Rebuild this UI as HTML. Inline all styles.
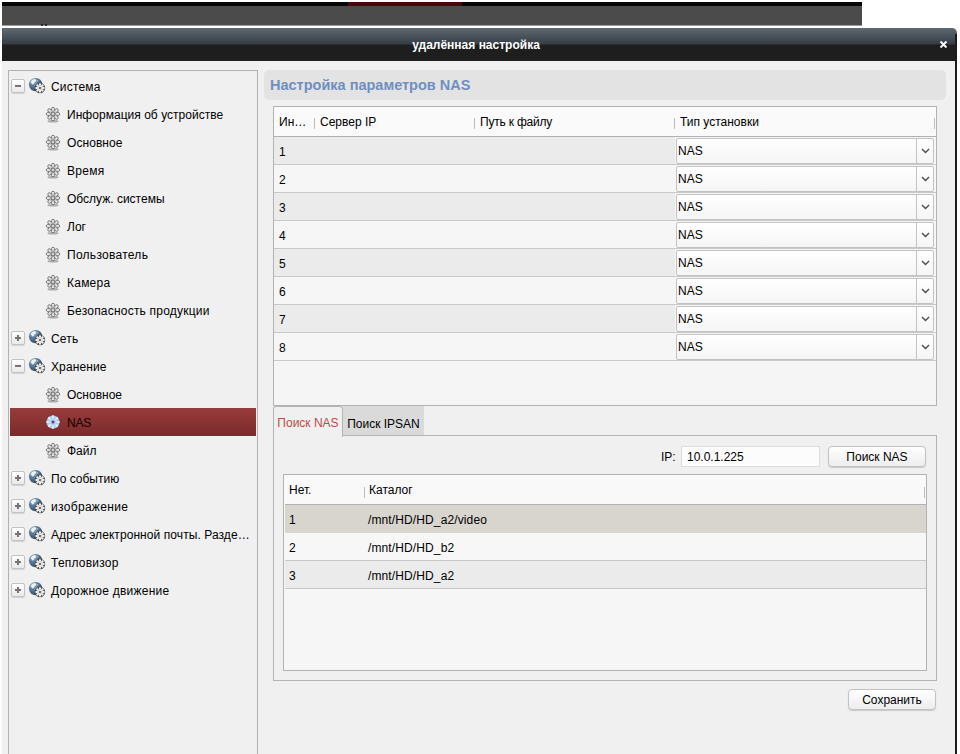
<!DOCTYPE html>
<html lang="ru">
<head>
<meta charset="utf-8">
<title>удалённая настройка</title>
<style>
html,body{margin:0;padding:0;background:#fff;}
body{width:960px;height:754px;position:relative;overflow:hidden;font-family:"Liberation Sans",Arial,sans-serif;font-size:12px;color:#000;}
.abs{position:absolute;}
#topstrip{left:2px;top:2px;width:860px;height:24px;background:linear-gradient(#4b4b4b 0,#4b4b4b 23px,#9a9a9a 23px);}
#topstrip .blk{left:0;top:0;width:860px;height:4px;background:#060606;}
#topstrip .red{left:346px;top:0;width:114px;height:4px;background:#4a0709;}
#win{left:2px;top:28px;width:953px;height:726px;background:#f0f0f0;}
#rb{left:953px;top:6px;width:2px;height:720px;background:#1c1c1c;}
#title{left:0;top:0;width:955px;height:33px;border-top-right-radius:5px;background:linear-gradient(to bottom,#606870 0px,#4a525b 8px,#363d45 16px,#1e1e1e 17px,#1e1e1e 33px);color:#fff;font-weight:bold;text-align:center;line-height:34px;font-size:12px;box-sizing:border-box;padding-right:7px;}
#close{left:937px;top:12px;width:9px;height:9px;}
#left{left:6px;top:42px;width:248px;height:700px;border:1px solid #b2b2b2;background:#f0f0f0;}
.row{position:absolute;left:1px;width:246px;height:28px;line-height:28px;white-space:nowrap;}
.row span{position:absolute;top:1px;}
.sel{background:linear-gradient(to bottom,#983b3b,#7c2a2a);color:#0a0000;}
.exp{position:absolute;left:1px;top:7px;width:12px;height:12px;border:1px solid #c2c2c2;border-radius:2px;background:linear-gradient(#fff,#e9e9e9);box-shadow:0 1px 1px rgba(0,0,0,.13);}
.exp i{position:absolute;left:3px;top:5px;width:6px;height:2px;background:#747474;}
.exp b{position:absolute;left:5px;top:3px;width:2px;height:6px;background:#747474;}
svg.ico{position:absolute;}
#hdr{left:262px;top:42px;width:682px;height:30px;background:#e3e3e3;border-radius:5px;color:#6f8fc0;font-weight:bold;font-size:14.5px;line-height:29px;}
#hdr span{position:absolute;left:6px;top:1px;}
#tbl{left:271px;top:78px;width:662px;height:298px;border:1px solid #b2b2b2;background:#f5f5f5;}
.th{position:absolute;top:1px;height:29px;line-height:29px;white-space:nowrap;}
.sep{position:absolute;width:1px;height:11px;background:#bdbdbd;}
.tr{position:absolute;left:0;height:27px;line-height:27px;border-top:1px solid #c9c9c9;}
.tr.o{background:#ebebeb;}
.tr.e{background:#f6f6f6;}
.tr span{position:absolute;top:2px;}
.selbox{position:absolute;left:402px;top:1px;width:256px;height:24px;border:1px solid #c3c3c3;border-radius:2px;background:linear-gradient(#ffffff,#f5f5f5);line-height:24px;}
.selbox u{position:absolute;left:239px;top:0;width:1px;height:24px;background:#c3c3c3;}
.selbox svg{position:absolute;left:244px;top:9px;}
.selbox em{position:absolute;left:1px;top:0;font-style:normal;}
.tab{position:absolute;top:378px;height:29px;line-height:31px;text-align:center;white-space:nowrap;}
#tabpanel{left:271px;top:407px;width:662px;height:244px;border:1px solid #b4b4b4;background:#f0f0f0;}
.btn{position:absolute;border:1px solid #c2c2c2;border-radius:4px;background:linear-gradient(#ffffff,#ededed);box-shadow:0 1px 1px rgba(0,0,0,.17);text-align:center;white-space:nowrap;}
</style>
</head>
<body>
<svg width="0" height="0" style="position:absolute;left:0;top:0"><defs><filter id="sb" x="-20%" y="-100%" width="140%" height="300%"><feGaussianBlur stdDeviation=".6"/></filter><linearGradient id="pg" x1="0" y1="0" x2="0" y2="1"><stop offset="0" stop-color="#fff"/><stop offset="1" stop-color="#d9d9d9"/></linearGradient><radialGradient id="rg"><stop offset="0" stop-color="#777" stop-opacity=".55"/><stop offset=".55" stop-color="#888" stop-opacity=".32"/><stop offset="1" stop-color="#999" stop-opacity="0"/></radialGradient></defs><defs><radialGradient id="gg" cx="32%" cy="26%" r="85%"><stop offset="0" stop-color="#b2c6d6"/><stop offset=".4" stop-color="#5b7a99"/><stop offset="1" stop-color="#293d56"/></radialGradient></defs></svg>
<div id="topstrip" class="abs"><div class="blk abs"></div><div class="red abs"></div><div class="abs" style="left:39px;top:22px;width:2px;height:2px;background:#1e0f0f;border-radius:1px"></div><div class="abs" style="left:43px;top:22px;width:2px;height:2px;background:#1e0f0f;border-radius:1px"></div></div>
<div id="win" class="abs">
  <div id="title" class="abs">удалённая настройка
    <svg id="close" class="abs" viewBox="0 0 9 9"><path d="M1.5 1.5 L7.5 7.5 M7.5 1.5 L1.5 7.5" stroke="#fff" stroke-width="1.8" fill="none"/></svg>
  </div>
  <div id="rb" class="abs"></div>
  <div id="left" class="abs">
<div class="row" style="top:1px"><div class="exp"><i></i></div><svg class="ico" style="left:17px;top:4px" width="20" height="20" viewBox="0 0 20 20"><circle cx="8.6" cy="8.6" r="6.7" fill="url(#gg)"/><path d="M3.6 6.2 Q5 3 8.2 2.9 L9.4 4.4 L8.6 5.8 L7.4 6.2 L6.8 7.8 L5.6 8.4 L4.6 7.2 Z" fill="#f4f8fb" opacity=".9"/><path d="M9.4 3.2 L11.6 4.4 L10.2 5.8 Z" fill="#dfeaf3" opacity=".55"/><circle cx="13" cy="12" r="5.2" fill="#444"/><circle cx="16.70" cy="12.00" r="1.1" fill="#fff"/><circle cx="15.62" cy="14.62" r="1.1" fill="#fff"/><circle cx="13.00" cy="15.70" r="1.1" fill="#fff"/><circle cx="10.38" cy="14.62" r="1.1" fill="#fff"/><circle cx="9.30" cy="12.00" r="1.1" fill="#fff"/><circle cx="10.38" cy="9.38" r="1.1" fill="#fff"/><circle cx="13.00" cy="8.30" r="1.1" fill="#fff"/><circle cx="15.62" cy="9.38" r="1.1" fill="#fff"/><circle cx="13" cy="12" r="3.1" fill="#e2e2e2"/><rect x="12.2" y="11.2" width="1.6" height="1.6" fill="#2a2a2a"/></svg><span style="left:41px;letter-spacing:0.171px">Система</span></div>
<div class="row" style="top:29px"><svg class="ico" style="left:35px;top:6px" width="16" height="18" viewBox="0 0 16 18"><ellipse cx="8" cy="15.3" rx="5.6" ry="1.2" fill="#000" opacity=".28" filter="url(#sb)"/><circle cx="8" cy="8" r="5.5" fill="#a8a8a8"/><rect x="6.55" y="1.3" width="2.9" height="6" rx="1.45" fill="#f7f7f7" stroke="#787878" stroke-width="1" transform="rotate(0 8 8)"/><rect x="6.55" y="1.3" width="2.9" height="6" rx="1.45" fill="#f7f7f7" stroke="#787878" stroke-width="1" transform="rotate(45 8 8)"/><rect x="6.55" y="1.3" width="2.9" height="6" rx="1.45" fill="#f7f7f7" stroke="#787878" stroke-width="1" transform="rotate(90 8 8)"/><rect x="6.55" y="1.3" width="2.9" height="6" rx="1.45" fill="#f7f7f7" stroke="#787878" stroke-width="1" transform="rotate(135 8 8)"/><rect x="6.55" y="1.3" width="2.9" height="6" rx="1.45" fill="#f7f7f7" stroke="#787878" stroke-width="1" transform="rotate(180 8 8)"/><rect x="6.55" y="1.3" width="2.9" height="6" rx="1.45" fill="#f7f7f7" stroke="#787878" stroke-width="1" transform="rotate(225 8 8)"/><rect x="6.55" y="1.3" width="2.9" height="6" rx="1.45" fill="#f7f7f7" stroke="#787878" stroke-width="1" transform="rotate(270 8 8)"/><rect x="6.55" y="1.3" width="2.9" height="6" rx="1.45" fill="#f7f7f7" stroke="#787878" stroke-width="1" transform="rotate(315 8 8)"/><circle cx="8" cy="8" r="3.4" fill="#ececec"/><circle cx="8" cy="8" r="6" fill="url(#rg)"/><circle cx="8" cy="8" r="2" fill="#d2d2d2" stroke="#707070" stroke-width="1.1"/></svg><span style="left:57px;letter-spacing:0.033px">Информация об устройстве</span></div>
<div class="row" style="top:57px"><svg class="ico" style="left:35px;top:6px" width="16" height="18" viewBox="0 0 16 18"><ellipse cx="8" cy="15.3" rx="5.6" ry="1.2" fill="#000" opacity=".28" filter="url(#sb)"/><circle cx="8" cy="8" r="5.5" fill="#a8a8a8"/><rect x="6.55" y="1.3" width="2.9" height="6" rx="1.45" fill="#f7f7f7" stroke="#787878" stroke-width="1" transform="rotate(0 8 8)"/><rect x="6.55" y="1.3" width="2.9" height="6" rx="1.45" fill="#f7f7f7" stroke="#787878" stroke-width="1" transform="rotate(45 8 8)"/><rect x="6.55" y="1.3" width="2.9" height="6" rx="1.45" fill="#f7f7f7" stroke="#787878" stroke-width="1" transform="rotate(90 8 8)"/><rect x="6.55" y="1.3" width="2.9" height="6" rx="1.45" fill="#f7f7f7" stroke="#787878" stroke-width="1" transform="rotate(135 8 8)"/><rect x="6.55" y="1.3" width="2.9" height="6" rx="1.45" fill="#f7f7f7" stroke="#787878" stroke-width="1" transform="rotate(180 8 8)"/><rect x="6.55" y="1.3" width="2.9" height="6" rx="1.45" fill="#f7f7f7" stroke="#787878" stroke-width="1" transform="rotate(225 8 8)"/><rect x="6.55" y="1.3" width="2.9" height="6" rx="1.45" fill="#f7f7f7" stroke="#787878" stroke-width="1" transform="rotate(270 8 8)"/><rect x="6.55" y="1.3" width="2.9" height="6" rx="1.45" fill="#f7f7f7" stroke="#787878" stroke-width="1" transform="rotate(315 8 8)"/><circle cx="8" cy="8" r="3.4" fill="#ececec"/><circle cx="8" cy="8" r="6" fill="url(#rg)"/><circle cx="8" cy="8" r="2" fill="#d2d2d2" stroke="#707070" stroke-width="1.1"/></svg><span style="left:57px;letter-spacing:0.062px">Основное</span></div>
<div class="row" style="top:85px"><svg class="ico" style="left:35px;top:6px" width="16" height="18" viewBox="0 0 16 18"><ellipse cx="8" cy="15.3" rx="5.6" ry="1.2" fill="#000" opacity=".28" filter="url(#sb)"/><circle cx="8" cy="8" r="5.5" fill="#a8a8a8"/><rect x="6.55" y="1.3" width="2.9" height="6" rx="1.45" fill="#f7f7f7" stroke="#787878" stroke-width="1" transform="rotate(0 8 8)"/><rect x="6.55" y="1.3" width="2.9" height="6" rx="1.45" fill="#f7f7f7" stroke="#787878" stroke-width="1" transform="rotate(45 8 8)"/><rect x="6.55" y="1.3" width="2.9" height="6" rx="1.45" fill="#f7f7f7" stroke="#787878" stroke-width="1" transform="rotate(90 8 8)"/><rect x="6.55" y="1.3" width="2.9" height="6" rx="1.45" fill="#f7f7f7" stroke="#787878" stroke-width="1" transform="rotate(135 8 8)"/><rect x="6.55" y="1.3" width="2.9" height="6" rx="1.45" fill="#f7f7f7" stroke="#787878" stroke-width="1" transform="rotate(180 8 8)"/><rect x="6.55" y="1.3" width="2.9" height="6" rx="1.45" fill="#f7f7f7" stroke="#787878" stroke-width="1" transform="rotate(225 8 8)"/><rect x="6.55" y="1.3" width="2.9" height="6" rx="1.45" fill="#f7f7f7" stroke="#787878" stroke-width="1" transform="rotate(270 8 8)"/><rect x="6.55" y="1.3" width="2.9" height="6" rx="1.45" fill="#f7f7f7" stroke="#787878" stroke-width="1" transform="rotate(315 8 8)"/><circle cx="8" cy="8" r="3.4" fill="#ececec"/><circle cx="8" cy="8" r="6" fill="url(#rg)"/><circle cx="8" cy="8" r="2" fill="#d2d2d2" stroke="#707070" stroke-width="1.1"/></svg><span style="left:57px;letter-spacing:0.300px">Время</span></div>
<div class="row" style="top:113px"><svg class="ico" style="left:35px;top:6px" width="16" height="18" viewBox="0 0 16 18"><ellipse cx="8" cy="15.3" rx="5.6" ry="1.2" fill="#000" opacity=".28" filter="url(#sb)"/><circle cx="8" cy="8" r="5.5" fill="#a8a8a8"/><rect x="6.55" y="1.3" width="2.9" height="6" rx="1.45" fill="#f7f7f7" stroke="#787878" stroke-width="1" transform="rotate(0 8 8)"/><rect x="6.55" y="1.3" width="2.9" height="6" rx="1.45" fill="#f7f7f7" stroke="#787878" stroke-width="1" transform="rotate(45 8 8)"/><rect x="6.55" y="1.3" width="2.9" height="6" rx="1.45" fill="#f7f7f7" stroke="#787878" stroke-width="1" transform="rotate(90 8 8)"/><rect x="6.55" y="1.3" width="2.9" height="6" rx="1.45" fill="#f7f7f7" stroke="#787878" stroke-width="1" transform="rotate(135 8 8)"/><rect x="6.55" y="1.3" width="2.9" height="6" rx="1.45" fill="#f7f7f7" stroke="#787878" stroke-width="1" transform="rotate(180 8 8)"/><rect x="6.55" y="1.3" width="2.9" height="6" rx="1.45" fill="#f7f7f7" stroke="#787878" stroke-width="1" transform="rotate(225 8 8)"/><rect x="6.55" y="1.3" width="2.9" height="6" rx="1.45" fill="#f7f7f7" stroke="#787878" stroke-width="1" transform="rotate(270 8 8)"/><rect x="6.55" y="1.3" width="2.9" height="6" rx="1.45" fill="#f7f7f7" stroke="#787878" stroke-width="1" transform="rotate(315 8 8)"/><circle cx="8" cy="8" r="3.4" fill="#ececec"/><circle cx="8" cy="8" r="6" fill="url(#rg)"/><circle cx="8" cy="8" r="2" fill="#d2d2d2" stroke="#707070" stroke-width="1.1"/></svg><span style="left:57px">Обслуж. системы</span></div>
<div class="row" style="top:141px"><svg class="ico" style="left:35px;top:6px" width="16" height="18" viewBox="0 0 16 18"><ellipse cx="8" cy="15.3" rx="5.6" ry="1.2" fill="#000" opacity=".28" filter="url(#sb)"/><circle cx="8" cy="8" r="5.5" fill="#a8a8a8"/><rect x="6.55" y="1.3" width="2.9" height="6" rx="1.45" fill="#f7f7f7" stroke="#787878" stroke-width="1" transform="rotate(0 8 8)"/><rect x="6.55" y="1.3" width="2.9" height="6" rx="1.45" fill="#f7f7f7" stroke="#787878" stroke-width="1" transform="rotate(45 8 8)"/><rect x="6.55" y="1.3" width="2.9" height="6" rx="1.45" fill="#f7f7f7" stroke="#787878" stroke-width="1" transform="rotate(90 8 8)"/><rect x="6.55" y="1.3" width="2.9" height="6" rx="1.45" fill="#f7f7f7" stroke="#787878" stroke-width="1" transform="rotate(135 8 8)"/><rect x="6.55" y="1.3" width="2.9" height="6" rx="1.45" fill="#f7f7f7" stroke="#787878" stroke-width="1" transform="rotate(180 8 8)"/><rect x="6.55" y="1.3" width="2.9" height="6" rx="1.45" fill="#f7f7f7" stroke="#787878" stroke-width="1" transform="rotate(225 8 8)"/><rect x="6.55" y="1.3" width="2.9" height="6" rx="1.45" fill="#f7f7f7" stroke="#787878" stroke-width="1" transform="rotate(270 8 8)"/><rect x="6.55" y="1.3" width="2.9" height="6" rx="1.45" fill="#f7f7f7" stroke="#787878" stroke-width="1" transform="rotate(315 8 8)"/><circle cx="8" cy="8" r="3.4" fill="#ececec"/><circle cx="8" cy="8" r="6" fill="url(#rg)"/><circle cx="8" cy="8" r="2" fill="#d2d2d2" stroke="#707070" stroke-width="1.1"/></svg><span style="left:57px">Лог</span></div>
<div class="row" style="top:169px"><svg class="ico" style="left:35px;top:6px" width="16" height="18" viewBox="0 0 16 18"><ellipse cx="8" cy="15.3" rx="5.6" ry="1.2" fill="#000" opacity=".28" filter="url(#sb)"/><circle cx="8" cy="8" r="5.5" fill="#a8a8a8"/><rect x="6.55" y="1.3" width="2.9" height="6" rx="1.45" fill="#f7f7f7" stroke="#787878" stroke-width="1" transform="rotate(0 8 8)"/><rect x="6.55" y="1.3" width="2.9" height="6" rx="1.45" fill="#f7f7f7" stroke="#787878" stroke-width="1" transform="rotate(45 8 8)"/><rect x="6.55" y="1.3" width="2.9" height="6" rx="1.45" fill="#f7f7f7" stroke="#787878" stroke-width="1" transform="rotate(90 8 8)"/><rect x="6.55" y="1.3" width="2.9" height="6" rx="1.45" fill="#f7f7f7" stroke="#787878" stroke-width="1" transform="rotate(135 8 8)"/><rect x="6.55" y="1.3" width="2.9" height="6" rx="1.45" fill="#f7f7f7" stroke="#787878" stroke-width="1" transform="rotate(180 8 8)"/><rect x="6.55" y="1.3" width="2.9" height="6" rx="1.45" fill="#f7f7f7" stroke="#787878" stroke-width="1" transform="rotate(225 8 8)"/><rect x="6.55" y="1.3" width="2.9" height="6" rx="1.45" fill="#f7f7f7" stroke="#787878" stroke-width="1" transform="rotate(270 8 8)"/><rect x="6.55" y="1.3" width="2.9" height="6" rx="1.45" fill="#f7f7f7" stroke="#787878" stroke-width="1" transform="rotate(315 8 8)"/><circle cx="8" cy="8" r="3.4" fill="#ececec"/><circle cx="8" cy="8" r="6" fill="url(#rg)"/><circle cx="8" cy="8" r="2" fill="#d2d2d2" stroke="#707070" stroke-width="1.1"/></svg><span style="left:57px;letter-spacing:0.275px">Пользователь</span></div>
<div class="row" style="top:197px"><svg class="ico" style="left:35px;top:6px" width="16" height="18" viewBox="0 0 16 18"><ellipse cx="8" cy="15.3" rx="5.6" ry="1.2" fill="#000" opacity=".28" filter="url(#sb)"/><circle cx="8" cy="8" r="5.5" fill="#a8a8a8"/><rect x="6.55" y="1.3" width="2.9" height="6" rx="1.45" fill="#f7f7f7" stroke="#787878" stroke-width="1" transform="rotate(0 8 8)"/><rect x="6.55" y="1.3" width="2.9" height="6" rx="1.45" fill="#f7f7f7" stroke="#787878" stroke-width="1" transform="rotate(45 8 8)"/><rect x="6.55" y="1.3" width="2.9" height="6" rx="1.45" fill="#f7f7f7" stroke="#787878" stroke-width="1" transform="rotate(90 8 8)"/><rect x="6.55" y="1.3" width="2.9" height="6" rx="1.45" fill="#f7f7f7" stroke="#787878" stroke-width="1" transform="rotate(135 8 8)"/><rect x="6.55" y="1.3" width="2.9" height="6" rx="1.45" fill="#f7f7f7" stroke="#787878" stroke-width="1" transform="rotate(180 8 8)"/><rect x="6.55" y="1.3" width="2.9" height="6" rx="1.45" fill="#f7f7f7" stroke="#787878" stroke-width="1" transform="rotate(225 8 8)"/><rect x="6.55" y="1.3" width="2.9" height="6" rx="1.45" fill="#f7f7f7" stroke="#787878" stroke-width="1" transform="rotate(270 8 8)"/><rect x="6.55" y="1.3" width="2.9" height="6" rx="1.45" fill="#f7f7f7" stroke="#787878" stroke-width="1" transform="rotate(315 8 8)"/><circle cx="8" cy="8" r="3.4" fill="#ececec"/><circle cx="8" cy="8" r="6" fill="url(#rg)"/><circle cx="8" cy="8" r="2" fill="#d2d2d2" stroke="#707070" stroke-width="1.1"/></svg><span style="left:57px;letter-spacing:0.233px">Камера</span></div>
<div class="row" style="top:225px"><svg class="ico" style="left:35px;top:6px" width="16" height="18" viewBox="0 0 16 18"><ellipse cx="8" cy="15.3" rx="5.6" ry="1.2" fill="#000" opacity=".28" filter="url(#sb)"/><circle cx="8" cy="8" r="5.5" fill="#a8a8a8"/><rect x="6.55" y="1.3" width="2.9" height="6" rx="1.45" fill="#f7f7f7" stroke="#787878" stroke-width="1" transform="rotate(0 8 8)"/><rect x="6.55" y="1.3" width="2.9" height="6" rx="1.45" fill="#f7f7f7" stroke="#787878" stroke-width="1" transform="rotate(45 8 8)"/><rect x="6.55" y="1.3" width="2.9" height="6" rx="1.45" fill="#f7f7f7" stroke="#787878" stroke-width="1" transform="rotate(90 8 8)"/><rect x="6.55" y="1.3" width="2.9" height="6" rx="1.45" fill="#f7f7f7" stroke="#787878" stroke-width="1" transform="rotate(135 8 8)"/><rect x="6.55" y="1.3" width="2.9" height="6" rx="1.45" fill="#f7f7f7" stroke="#787878" stroke-width="1" transform="rotate(180 8 8)"/><rect x="6.55" y="1.3" width="2.9" height="6" rx="1.45" fill="#f7f7f7" stroke="#787878" stroke-width="1" transform="rotate(225 8 8)"/><rect x="6.55" y="1.3" width="2.9" height="6" rx="1.45" fill="#f7f7f7" stroke="#787878" stroke-width="1" transform="rotate(270 8 8)"/><rect x="6.55" y="1.3" width="2.9" height="6" rx="1.45" fill="#f7f7f7" stroke="#787878" stroke-width="1" transform="rotate(315 8 8)"/><circle cx="8" cy="8" r="3.4" fill="#ececec"/><circle cx="8" cy="8" r="6" fill="url(#rg)"/><circle cx="8" cy="8" r="2" fill="#d2d2d2" stroke="#707070" stroke-width="1.1"/></svg><span style="left:57px;letter-spacing:0.209px">Безопасность продукции</span></div>
<div class="row" style="top:253px"><div class="exp"><i></i><b></b></div><svg class="ico" style="left:17px;top:4px" width="20" height="20" viewBox="0 0 20 20"><circle cx="8.6" cy="8.6" r="6.7" fill="url(#gg)"/><path d="M3.6 6.2 Q5 3 8.2 2.9 L9.4 4.4 L8.6 5.8 L7.4 6.2 L6.8 7.8 L5.6 8.4 L4.6 7.2 Z" fill="#f4f8fb" opacity=".9"/><path d="M9.4 3.2 L11.6 4.4 L10.2 5.8 Z" fill="#dfeaf3" opacity=".55"/><circle cx="13" cy="12" r="5.2" fill="#444"/><circle cx="16.70" cy="12.00" r="1.1" fill="#fff"/><circle cx="15.62" cy="14.62" r="1.1" fill="#fff"/><circle cx="13.00" cy="15.70" r="1.1" fill="#fff"/><circle cx="10.38" cy="14.62" r="1.1" fill="#fff"/><circle cx="9.30" cy="12.00" r="1.1" fill="#fff"/><circle cx="10.38" cy="9.38" r="1.1" fill="#fff"/><circle cx="13.00" cy="8.30" r="1.1" fill="#fff"/><circle cx="15.62" cy="9.38" r="1.1" fill="#fff"/><circle cx="13" cy="12" r="3.1" fill="#e2e2e2"/><rect x="12.2" y="11.2" width="1.6" height="1.6" fill="#2a2a2a"/></svg><span style="left:41px;letter-spacing:0.150px">Сеть</span></div>
<div class="row" style="top:281px"><div class="exp"><i></i></div><svg class="ico" style="left:17px;top:4px" width="20" height="20" viewBox="0 0 20 20"><circle cx="8.6" cy="8.6" r="6.7" fill="url(#gg)"/><path d="M3.6 6.2 Q5 3 8.2 2.9 L9.4 4.4 L8.6 5.8 L7.4 6.2 L6.8 7.8 L5.6 8.4 L4.6 7.2 Z" fill="#f4f8fb" opacity=".9"/><path d="M9.4 3.2 L11.6 4.4 L10.2 5.8 Z" fill="#dfeaf3" opacity=".55"/><circle cx="13" cy="12" r="5.2" fill="#444"/><circle cx="16.70" cy="12.00" r="1.1" fill="#fff"/><circle cx="15.62" cy="14.62" r="1.1" fill="#fff"/><circle cx="13.00" cy="15.70" r="1.1" fill="#fff"/><circle cx="10.38" cy="14.62" r="1.1" fill="#fff"/><circle cx="9.30" cy="12.00" r="1.1" fill="#fff"/><circle cx="10.38" cy="9.38" r="1.1" fill="#fff"/><circle cx="13.00" cy="8.30" r="1.1" fill="#fff"/><circle cx="15.62" cy="9.38" r="1.1" fill="#fff"/><circle cx="13" cy="12" r="3.1" fill="#e2e2e2"/><rect x="12.2" y="11.2" width="1.6" height="1.6" fill="#2a2a2a"/></svg><span style="left:41px;letter-spacing:0.100px">Хранение</span></div>
<div class="row" style="top:309px"><svg class="ico" style="left:35px;top:6px" width="16" height="18" viewBox="0 0 16 18"><ellipse cx="8" cy="15.3" rx="5.6" ry="1.2" fill="#000" opacity=".28" filter="url(#sb)"/><circle cx="8" cy="8" r="5.5" fill="#a8a8a8"/><rect x="6.55" y="1.3" width="2.9" height="6" rx="1.45" fill="#f7f7f7" stroke="#787878" stroke-width="1" transform="rotate(0 8 8)"/><rect x="6.55" y="1.3" width="2.9" height="6" rx="1.45" fill="#f7f7f7" stroke="#787878" stroke-width="1" transform="rotate(45 8 8)"/><rect x="6.55" y="1.3" width="2.9" height="6" rx="1.45" fill="#f7f7f7" stroke="#787878" stroke-width="1" transform="rotate(90 8 8)"/><rect x="6.55" y="1.3" width="2.9" height="6" rx="1.45" fill="#f7f7f7" stroke="#787878" stroke-width="1" transform="rotate(135 8 8)"/><rect x="6.55" y="1.3" width="2.9" height="6" rx="1.45" fill="#f7f7f7" stroke="#787878" stroke-width="1" transform="rotate(180 8 8)"/><rect x="6.55" y="1.3" width="2.9" height="6" rx="1.45" fill="#f7f7f7" stroke="#787878" stroke-width="1" transform="rotate(225 8 8)"/><rect x="6.55" y="1.3" width="2.9" height="6" rx="1.45" fill="#f7f7f7" stroke="#787878" stroke-width="1" transform="rotate(270 8 8)"/><rect x="6.55" y="1.3" width="2.9" height="6" rx="1.45" fill="#f7f7f7" stroke="#787878" stroke-width="1" transform="rotate(315 8 8)"/><circle cx="8" cy="8" r="3.4" fill="#ececec"/><circle cx="8" cy="8" r="6" fill="url(#rg)"/><circle cx="8" cy="8" r="2" fill="#d2d2d2" stroke="#707070" stroke-width="1.1"/></svg><span style="left:57px">Основное</span></div>
<div class="row sel" style="top:337px"><svg class="ico" style="left:35px;top:6px" width="16" height="18" viewBox="0 0 16 18"><circle cx="8" cy="8" r="6.6" fill="#9fc2e4"/><rect x="6.7" y="1.3" width="2.6" height="3.6" rx="1.3" fill="#dcecfb" transform="rotate(0 8 8)"/><rect x="6.7" y="1.3" width="2.6" height="3.6" rx="1.3" fill="#dcecfb" transform="rotate(45 8 8)"/><rect x="6.7" y="1.3" width="2.6" height="3.6" rx="1.3" fill="#dcecfb" transform="rotate(90 8 8)"/><rect x="6.7" y="1.3" width="2.6" height="3.6" rx="1.3" fill="#dcecfb" transform="rotate(135 8 8)"/><rect x="6.7" y="1.3" width="2.6" height="3.6" rx="1.3" fill="#dcecfb" transform="rotate(180 8 8)"/><rect x="6.7" y="1.3" width="2.6" height="3.6" rx="1.3" fill="#dcecfb" transform="rotate(225 8 8)"/><rect x="6.7" y="1.3" width="2.6" height="3.6" rx="1.3" fill="#dcecfb" transform="rotate(270 8 8)"/><rect x="6.7" y="1.3" width="2.6" height="3.6" rx="1.3" fill="#dcecfb" transform="rotate(315 8 8)"/><circle cx="8" cy="8" r="3.4" fill="#b4d3f0"/><circle cx="8" cy="8" r="1.5" fill="#5f3f5a"/></svg><span style="left:57px;letter-spacing:-0.267px">NAS</span></div>
<div class="row" style="top:365px"><svg class="ico" style="left:35px;top:6px" width="16" height="18" viewBox="0 0 16 18"><ellipse cx="8" cy="15.3" rx="5.6" ry="1.2" fill="#000" opacity=".28" filter="url(#sb)"/><circle cx="8" cy="8" r="5.5" fill="#a8a8a8"/><rect x="6.55" y="1.3" width="2.9" height="6" rx="1.45" fill="#f7f7f7" stroke="#787878" stroke-width="1" transform="rotate(0 8 8)"/><rect x="6.55" y="1.3" width="2.9" height="6" rx="1.45" fill="#f7f7f7" stroke="#787878" stroke-width="1" transform="rotate(45 8 8)"/><rect x="6.55" y="1.3" width="2.9" height="6" rx="1.45" fill="#f7f7f7" stroke="#787878" stroke-width="1" transform="rotate(90 8 8)"/><rect x="6.55" y="1.3" width="2.9" height="6" rx="1.45" fill="#f7f7f7" stroke="#787878" stroke-width="1" transform="rotate(135 8 8)"/><rect x="6.55" y="1.3" width="2.9" height="6" rx="1.45" fill="#f7f7f7" stroke="#787878" stroke-width="1" transform="rotate(180 8 8)"/><rect x="6.55" y="1.3" width="2.9" height="6" rx="1.45" fill="#f7f7f7" stroke="#787878" stroke-width="1" transform="rotate(225 8 8)"/><rect x="6.55" y="1.3" width="2.9" height="6" rx="1.45" fill="#f7f7f7" stroke="#787878" stroke-width="1" transform="rotate(270 8 8)"/><rect x="6.55" y="1.3" width="2.9" height="6" rx="1.45" fill="#f7f7f7" stroke="#787878" stroke-width="1" transform="rotate(315 8 8)"/><circle cx="8" cy="8" r="3.4" fill="#ececec"/><circle cx="8" cy="8" r="6" fill="url(#rg)"/><circle cx="8" cy="8" r="2" fill="#d2d2d2" stroke="#707070" stroke-width="1.1"/></svg><span style="left:57px">Файл</span></div>
<div class="row" style="top:393px"><div class="exp"><i></i><b></b></div><svg class="ico" style="left:17px;top:4px" width="20" height="20" viewBox="0 0 20 20"><circle cx="8.6" cy="8.6" r="6.7" fill="url(#gg)"/><path d="M3.6 6.2 Q5 3 8.2 2.9 L9.4 4.4 L8.6 5.8 L7.4 6.2 L6.8 7.8 L5.6 8.4 L4.6 7.2 Z" fill="#f4f8fb" opacity=".9"/><path d="M9.4 3.2 L11.6 4.4 L10.2 5.8 Z" fill="#dfeaf3" opacity=".55"/><circle cx="13" cy="12" r="5.2" fill="#444"/><circle cx="16.70" cy="12.00" r="1.1" fill="#fff"/><circle cx="15.62" cy="14.62" r="1.1" fill="#fff"/><circle cx="13.00" cy="15.70" r="1.1" fill="#fff"/><circle cx="10.38" cy="14.62" r="1.1" fill="#fff"/><circle cx="9.30" cy="12.00" r="1.1" fill="#fff"/><circle cx="10.38" cy="9.38" r="1.1" fill="#fff"/><circle cx="13.00" cy="8.30" r="1.1" fill="#fff"/><circle cx="15.62" cy="9.38" r="1.1" fill="#fff"/><circle cx="13" cy="12" r="3.1" fill="#e2e2e2"/><rect x="12.2" y="11.2" width="1.6" height="1.6" fill="#2a2a2a"/></svg><span style="left:41px">По событию</span></div>
<div class="row" style="top:421px"><div class="exp"><i></i><b></b></div><svg class="ico" style="left:17px;top:4px" width="20" height="20" viewBox="0 0 20 20"><circle cx="8.6" cy="8.6" r="6.7" fill="url(#gg)"/><path d="M3.6 6.2 Q5 3 8.2 2.9 L9.4 4.4 L8.6 5.8 L7.4 6.2 L6.8 7.8 L5.6 8.4 L4.6 7.2 Z" fill="#f4f8fb" opacity=".9"/><path d="M9.4 3.2 L11.6 4.4 L10.2 5.8 Z" fill="#dfeaf3" opacity=".55"/><circle cx="13" cy="12" r="5.2" fill="#444"/><circle cx="16.70" cy="12.00" r="1.1" fill="#fff"/><circle cx="15.62" cy="14.62" r="1.1" fill="#fff"/><circle cx="13.00" cy="15.70" r="1.1" fill="#fff"/><circle cx="10.38" cy="14.62" r="1.1" fill="#fff"/><circle cx="9.30" cy="12.00" r="1.1" fill="#fff"/><circle cx="10.38" cy="9.38" r="1.1" fill="#fff"/><circle cx="13.00" cy="8.30" r="1.1" fill="#fff"/><circle cx="15.62" cy="9.38" r="1.1" fill="#fff"/><circle cx="13" cy="12" r="3.1" fill="#e2e2e2"/><rect x="12.2" y="11.2" width="1.6" height="1.6" fill="#2a2a2a"/></svg><span style="left:41px;letter-spacing:0.318px">изображение</span></div>
<div class="row" style="top:449px"><div class="exp"><i></i><b></b></div><svg class="ico" style="left:17px;top:4px" width="20" height="20" viewBox="0 0 20 20"><circle cx="8.6" cy="8.6" r="6.7" fill="url(#gg)"/><path d="M3.6 6.2 Q5 3 8.2 2.9 L9.4 4.4 L8.6 5.8 L7.4 6.2 L6.8 7.8 L5.6 8.4 L4.6 7.2 Z" fill="#f4f8fb" opacity=".9"/><path d="M9.4 3.2 L11.6 4.4 L10.2 5.8 Z" fill="#dfeaf3" opacity=".55"/><circle cx="13" cy="12" r="5.2" fill="#444"/><circle cx="16.70" cy="12.00" r="1.1" fill="#fff"/><circle cx="15.62" cy="14.62" r="1.1" fill="#fff"/><circle cx="13.00" cy="15.70" r="1.1" fill="#fff"/><circle cx="10.38" cy="14.62" r="1.1" fill="#fff"/><circle cx="9.30" cy="12.00" r="1.1" fill="#fff"/><circle cx="10.38" cy="9.38" r="1.1" fill="#fff"/><circle cx="13.00" cy="8.30" r="1.1" fill="#fff"/><circle cx="15.62" cy="9.38" r="1.1" fill="#fff"/><circle cx="13" cy="12" r="3.1" fill="#e2e2e2"/><rect x="12.2" y="11.2" width="1.6" height="1.6" fill="#2a2a2a"/></svg><span style="left:41px;letter-spacing:0.074px">Адрес электронной почты. Разде…</span></div>
<div class="row" style="top:477px"><div class="exp"><i></i><b></b></div><svg class="ico" style="left:17px;top:4px" width="20" height="20" viewBox="0 0 20 20"><circle cx="8.6" cy="8.6" r="6.7" fill="url(#gg)"/><path d="M3.6 6.2 Q5 3 8.2 2.9 L9.4 4.4 L8.6 5.8 L7.4 6.2 L6.8 7.8 L5.6 8.4 L4.6 7.2 Z" fill="#f4f8fb" opacity=".9"/><path d="M9.4 3.2 L11.6 4.4 L10.2 5.8 Z" fill="#dfeaf3" opacity=".55"/><circle cx="13" cy="12" r="5.2" fill="#444"/><circle cx="16.70" cy="12.00" r="1.1" fill="#fff"/><circle cx="15.62" cy="14.62" r="1.1" fill="#fff"/><circle cx="13.00" cy="15.70" r="1.1" fill="#fff"/><circle cx="10.38" cy="14.62" r="1.1" fill="#fff"/><circle cx="9.30" cy="12.00" r="1.1" fill="#fff"/><circle cx="10.38" cy="9.38" r="1.1" fill="#fff"/><circle cx="13.00" cy="8.30" r="1.1" fill="#fff"/><circle cx="15.62" cy="9.38" r="1.1" fill="#fff"/><circle cx="13" cy="12" r="3.1" fill="#e2e2e2"/><rect x="12.2" y="11.2" width="1.6" height="1.6" fill="#2a2a2a"/></svg><span style="left:41px;letter-spacing:0.220px">Тепловизор</span></div>
<div class="row" style="top:505px"><div class="exp"><i></i><b></b></div><svg class="ico" style="left:17px;top:4px" width="20" height="20" viewBox="0 0 20 20"><circle cx="8.6" cy="8.6" r="6.7" fill="url(#gg)"/><path d="M3.6 6.2 Q5 3 8.2 2.9 L9.4 4.4 L8.6 5.8 L7.4 6.2 L6.8 7.8 L5.6 8.4 L4.6 7.2 Z" fill="#f4f8fb" opacity=".9"/><path d="M9.4 3.2 L11.6 4.4 L10.2 5.8 Z" fill="#dfeaf3" opacity=".55"/><circle cx="13" cy="12" r="5.2" fill="#444"/><circle cx="16.70" cy="12.00" r="1.1" fill="#fff"/><circle cx="15.62" cy="14.62" r="1.1" fill="#fff"/><circle cx="13.00" cy="15.70" r="1.1" fill="#fff"/><circle cx="10.38" cy="14.62" r="1.1" fill="#fff"/><circle cx="9.30" cy="12.00" r="1.1" fill="#fff"/><circle cx="10.38" cy="9.38" r="1.1" fill="#fff"/><circle cx="13.00" cy="8.30" r="1.1" fill="#fff"/><circle cx="15.62" cy="9.38" r="1.1" fill="#fff"/><circle cx="13" cy="12" r="3.1" fill="#e2e2e2"/><rect x="12.2" y="11.2" width="1.6" height="1.6" fill="#2a2a2a"/></svg><span style="left:41px;letter-spacing:0.247px">Дорожное движение</span></div>
</div>
  <div id="hdr" class="abs"><span>Настройка параметров NAS</span></div>
  <div id="tbl" class="abs">
<div class="abs" style="left:0;top:0;width:662px;height:29px;background:#fafafa"></div>
<div class="th" style="left:5px">Ин…</div>
<div class="sep" style="left:40px;top:11px"></div>
<div class="th" style="left:46px">Сервер IP</div>
<div class="sep" style="left:200px;top:11px"></div>
<div class="th" style="left:206px;letter-spacing:-0.2px">Путь к файлу</div>
<div class="sep" style="left:400px;top:11px"></div>
<div class="th" style="left:406px">Тип установки</div>
<div class="sep" style="left:660px;top:11px"></div>
<div class="tr o" style="top:29px;width:662px;border-top-color:#b0b0b0"><span style="left:5px">1</span><div class="abs" style="left:401px;top:0;width:261px;height:27px;background:#f6f6f6"></div><div class="selbox"><em>NAS</em><u></u><svg width="9" height="6" viewBox="0 0 9 6"><path d="M1 1 L4.5 4.5 L8 1" stroke="#4a4a4a" stroke-width="1.35" fill="none"/></svg></div></div>
<div class="tr e" style="top:57px;width:662px"><span style="left:5px">2</span><div class="abs" style="left:401px;top:0;width:261px;height:27px;background:#f6f6f6"></div><div class="selbox"><em>NAS</em><u></u><svg width="9" height="6" viewBox="0 0 9 6"><path d="M1 1 L4.5 4.5 L8 1" stroke="#4a4a4a" stroke-width="1.35" fill="none"/></svg></div></div>
<div class="tr o" style="top:85px;width:662px"><span style="left:5px">3</span><div class="abs" style="left:401px;top:0;width:261px;height:27px;background:#f6f6f6"></div><div class="selbox"><em>NAS</em><u></u><svg width="9" height="6" viewBox="0 0 9 6"><path d="M1 1 L4.5 4.5 L8 1" stroke="#4a4a4a" stroke-width="1.35" fill="none"/></svg></div></div>
<div class="tr e" style="top:113px;width:662px"><span style="left:5px">4</span><div class="abs" style="left:401px;top:0;width:261px;height:27px;background:#f6f6f6"></div><div class="selbox"><em>NAS</em><u></u><svg width="9" height="6" viewBox="0 0 9 6"><path d="M1 1 L4.5 4.5 L8 1" stroke="#4a4a4a" stroke-width="1.35" fill="none"/></svg></div></div>
<div class="tr o" style="top:141px;width:662px"><span style="left:5px">5</span><div class="abs" style="left:401px;top:0;width:261px;height:27px;background:#f6f6f6"></div><div class="selbox"><em>NAS</em><u></u><svg width="9" height="6" viewBox="0 0 9 6"><path d="M1 1 L4.5 4.5 L8 1" stroke="#4a4a4a" stroke-width="1.35" fill="none"/></svg></div></div>
<div class="tr e" style="top:169px;width:662px"><span style="left:5px">6</span><div class="abs" style="left:401px;top:0;width:261px;height:27px;background:#f6f6f6"></div><div class="selbox"><em>NAS</em><u></u><svg width="9" height="6" viewBox="0 0 9 6"><path d="M1 1 L4.5 4.5 L8 1" stroke="#4a4a4a" stroke-width="1.35" fill="none"/></svg></div></div>
<div class="tr o" style="top:197px;width:662px"><span style="left:5px">7</span><div class="abs" style="left:401px;top:0;width:261px;height:27px;background:#f6f6f6"></div><div class="selbox"><em>NAS</em><u></u><svg width="9" height="6" viewBox="0 0 9 6"><path d="M1 1 L4.5 4.5 L8 1" stroke="#4a4a4a" stroke-width="1.35" fill="none"/></svg></div></div>
<div class="tr e" style="top:225px;width:662px"><span style="left:5px">8</span><div class="abs" style="left:401px;top:0;width:261px;height:27px;background:#f6f6f6"></div><div class="selbox"><em>NAS</em><u></u><svg width="9" height="6" viewBox="0 0 9 6"><path d="M1 1 L4.5 4.5 L8 1" stroke="#4a4a4a" stroke-width="1.35" fill="none"/></svg></div></div>
<div class="abs" style="left:0;top:253px;width:662px;height:1px;background:#c9c9c9"></div>
</div>
  <div class="tab" style="left:271px;width:68px;background:#f0f0f0;border:1px solid #b4b4b4;border-bottom:none;border-radius:3px 3px 0 0;color:#c0494c;height:30px;line-height:33px;z-index:3">Поиск NAS</div>
<div class="tab" style="left:341px;width:81px;background:#dadada;color:#000;line-height:37px;">Поиск IPSAN</div>
  <div id="tabpanel" class="abs">
<div class="abs" style="left:387px;top:11px;height:21px;line-height:21px;">IP:</div>
<div class="abs" style="left:407px;top:10px;width:137px;height:19px;line-height:19px;border:1px solid #dcdcdc;background:#fcfcfc;"><span style="position:absolute;left:5px;top:1px">10.0.1.225</span></div>
<div class="btn" style="left:554px;top:10px;width:96px;height:19px;line-height:21px;">Поиск NAS</div>
<div class="abs" style="left:9px;top:38px;width:642px;height:195px;border:1px solid #b2b2b2;background:#f6f6f6;"><div class="abs" style="left:0;top:0;width:642px;height:29px;background:#f9f9f9"></div>
<div class="th" style="left:5px">Нет.</div><div class="sep" style="left:80px;top:12px"></div>
<div class="th" style="left:85px">Каталог</div><div class="sep" style="left:640px;top:12px"></div>
<div class="tr" style="top:29px;left:1px;width:641px;background:#d8d4ce;border-top-color:#b2b2b2"><span style="left:4px">1</span><span style="left:83px;letter-spacing:0.12px">/mnt/HD/HD_a2/video</span></div>
<div class="tr" style="top:57px;left:1px;width:641px;background:#f7f7f7;border-top-color:#d8d4ce"><span style="left:4px">2</span><span style="left:83px;letter-spacing:0.12px">/mnt/HD/HD_b2</span></div>
<div class="tr" style="top:85px;left:1px;width:641px;background:#ebebeb;border-top-color:#c8c8c8"><span style="left:4px">3</span><span style="left:83px;letter-spacing:0.12px">/mnt/HD/HD_a2</span></div>
<div class="abs" style="left:0;top:113px;width:641px;left:1px;height:1px;background:#c8c8c8"></div></div>
</div>
  <div class="btn" style="left:846px;top:661px;width:86px;height:19px;line-height:21px;">Сохранить</div>
</div>
</body>
</html>
